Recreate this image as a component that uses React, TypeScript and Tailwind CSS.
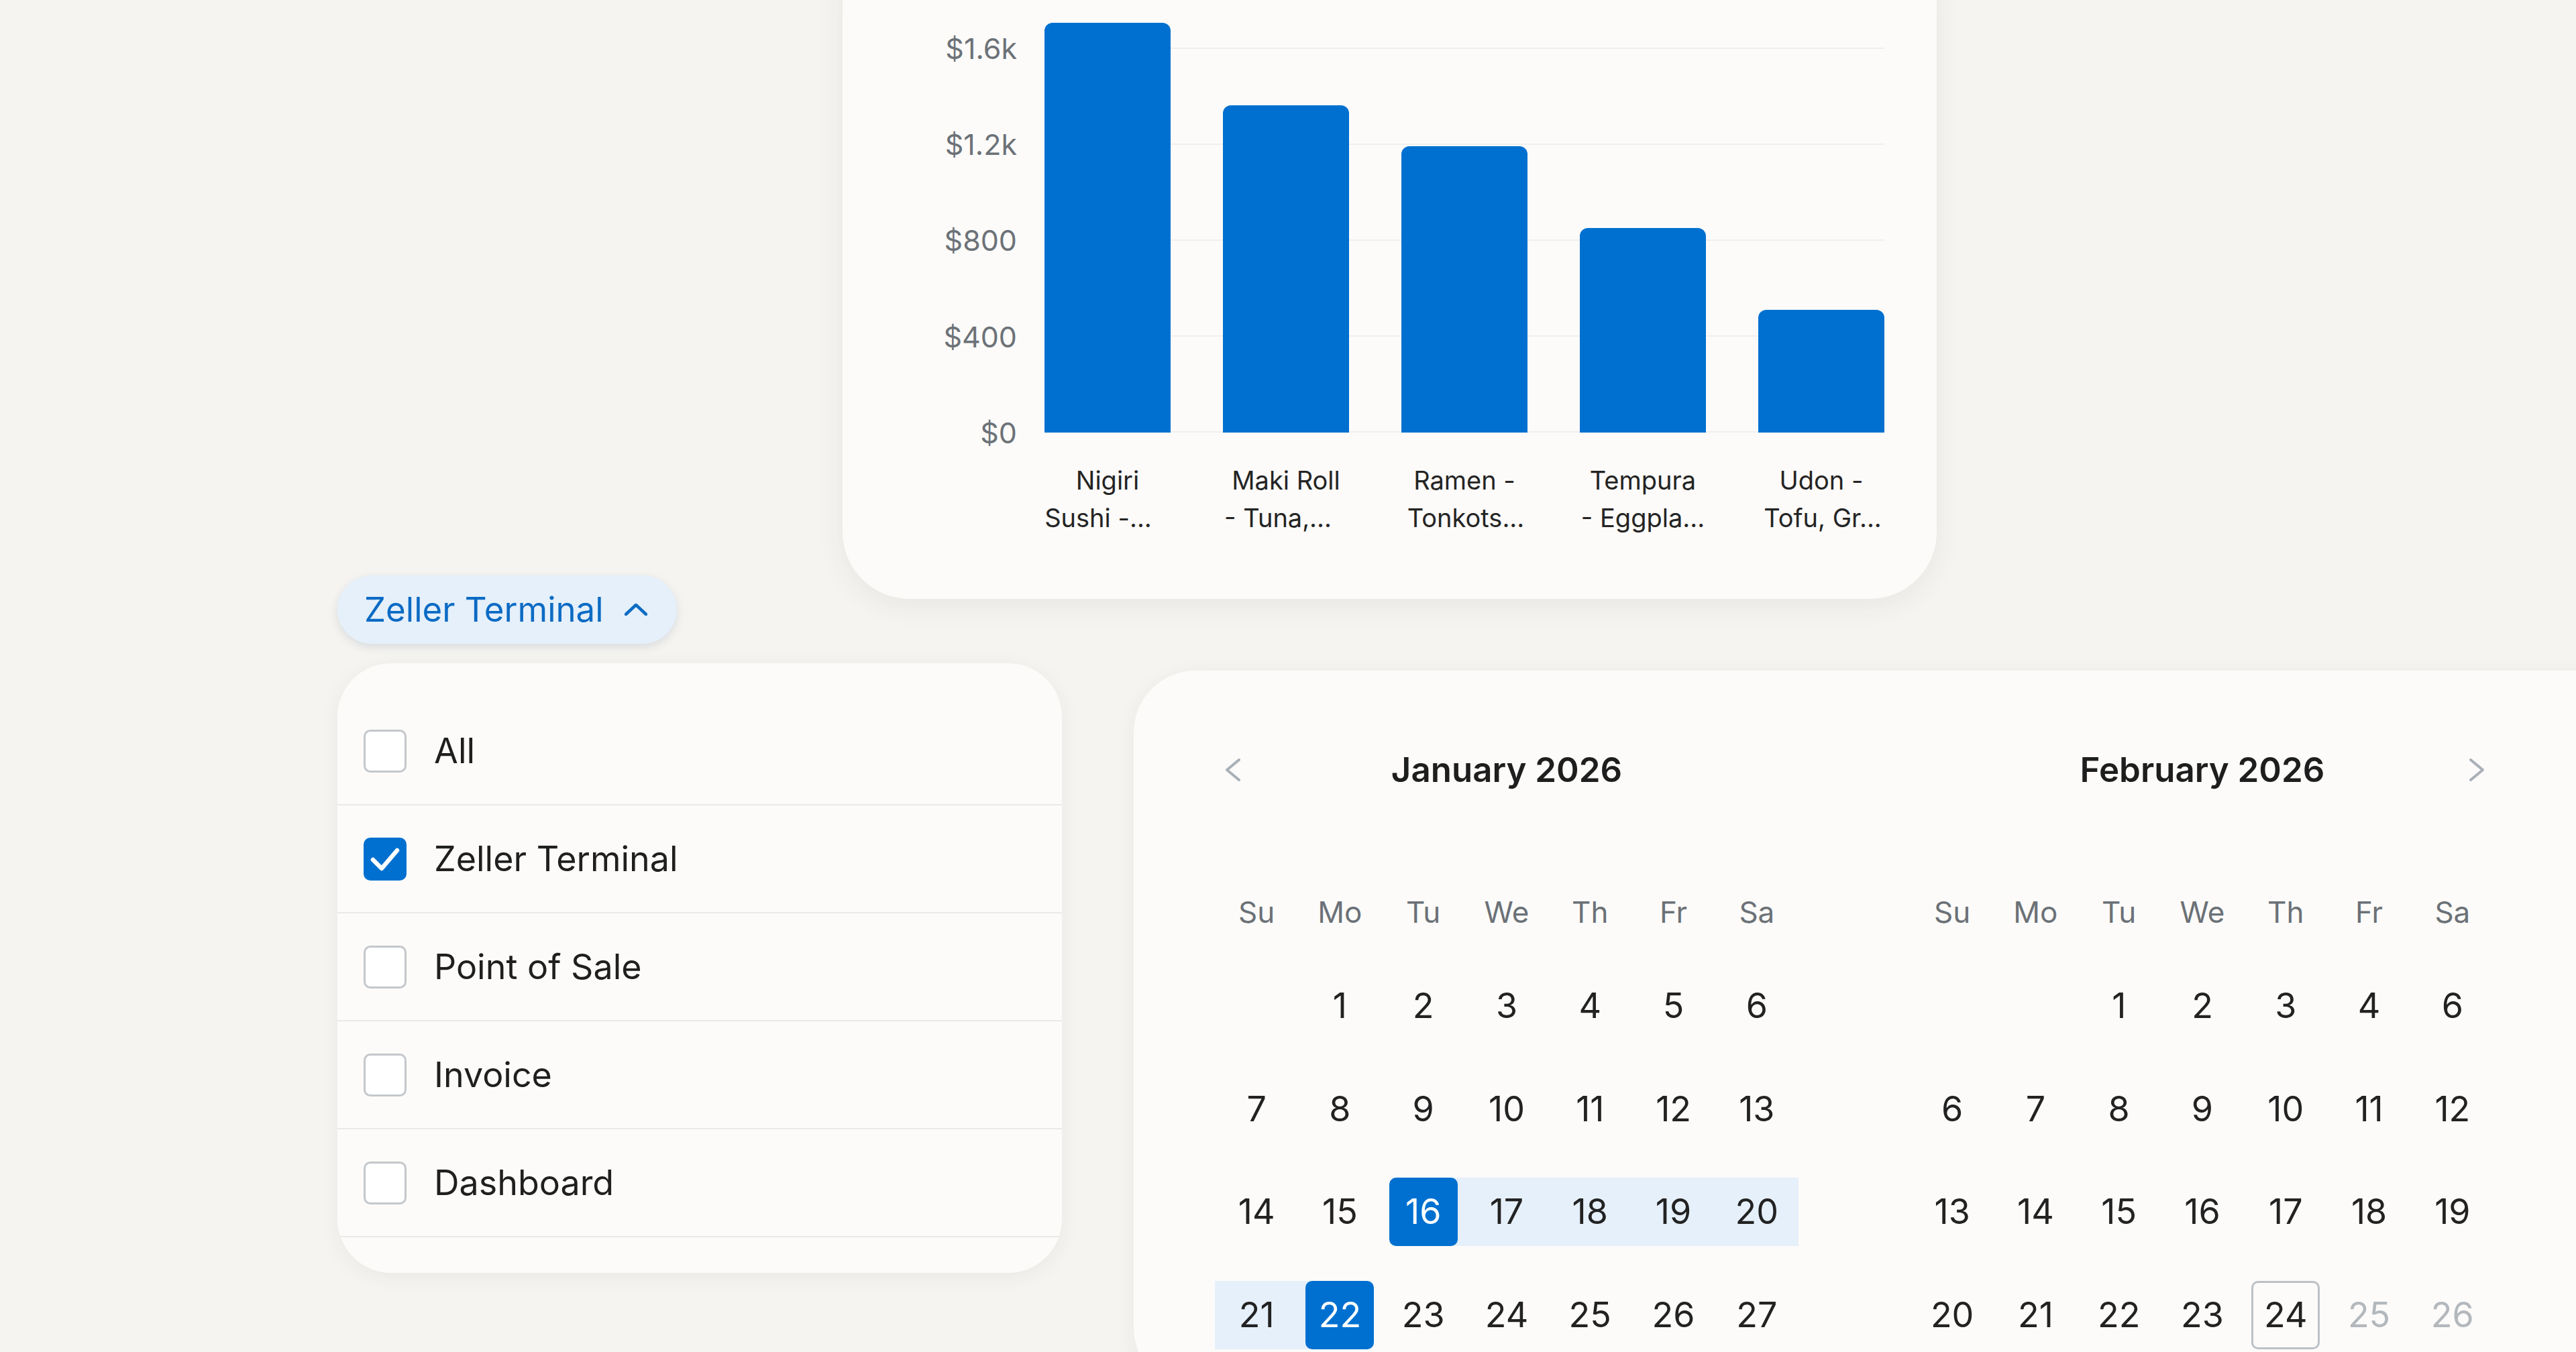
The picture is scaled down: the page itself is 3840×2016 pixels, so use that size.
import type { ReactNode } from "react";

const bars = [
	{ value: 1707, l1: "Nigiri", l2: "Sushi -...", shift: "pr-[28px]" },
	{ value: 1363, l1: "Maki Roll", l2: "- Tuna,...", shift: "pr-[24px]" },
	{ value: 1193, l1: "Ramen -", l2: "Tonkots...", shift: "pl-[4px]" },
	{ value: 852, l1: "Tempura", l2: "- Eggpla...", shift: "" },
	{ value: 511, l1: "Udon -", l2: "Tofu, Gr...", shift: "pl-[4px]" },
];

const ticks = ["$1.6k", "$1.2k", "$800", "$400", "$0"];

// px per dollar on the y axis
const SCALE = 573 / 1600;

const channels = [
	{ label: "All", checked: false },
	{ label: "Zeller Terminal", checked: true },
	{ label: "Point of Sale", checked: false },
	{ label: "Invoice", checked: false },
	{ label: "Dashboard", checked: false },
];

const weekdays = ["Su", "Mo", "Tu", "We", "Th", "Fr", "Sa"];

type Day = {
	n?: number;
	kind?: "start" | "end" | "range" | "today" | "disabled";
};

const january: Day[][] = [
	[{}, { n: 1 }, { n: 2 }, { n: 3 }, { n: 4 }, { n: 5 }, { n: 6 }],
	[{ n: 7 }, { n: 8 }, { n: 9 }, { n: 10 }, { n: 11 }, { n: 12 }, { n: 13 }],
	[
		{ n: 14 },
		{ n: 15 },
		{ n: 16, kind: "start" },
		{ n: 17, kind: "range" },
		{ n: 18, kind: "range" },
		{ n: 19, kind: "range" },
		{ n: 20, kind: "range" },
	],
	[
		{ n: 21, kind: "range" },
		{ n: 22, kind: "end" },
		{ n: 23 },
		{ n: 24 },
		{ n: 25 },
		{ n: 26 },
		{ n: 27 },
	],
];

const february: Day[][] = [
	[{}, {}, { n: 1 }, { n: 2 }, { n: 3 }, { n: 4 }, { n: 6 }],
	[{ n: 6 }, { n: 7 }, { n: 8 }, { n: 9 }, { n: 10 }, { n: 11 }, { n: 12 }],
	[{ n: 13 }, { n: 14 }, { n: 15 }, { n: 16 }, { n: 17 }, { n: 18 }, { n: 19 }],
	[
		{ n: 20 },
		{ n: 21 },
		{ n: 22 },
		{ n: 23 },
		{ n: 24, kind: "today" },
		{ n: 25, kind: "disabled" },
		{ n: 26, kind: "disabled" },
	],
];

function ChartCard() {
	return (
		<section className="ml-[1256px] mt-[-100px] w-[1631px] rounded-[100px] bg-[#fcfbf9] pt-[100px] pb-[93px] pr-[79px] shadow-[0_10px_40px_rgba(60,50,30,0.07)]">
			<div className="flex">
				<div className="w-[260px] shrink-0">
					<div className="mt-[72px] flex h-[573px] flex-col justify-between">
						{ticks.map((t) => (
							<div
								key={t}
								className="flex h-0 items-center justify-end text-[43px] text-[#6c7278]"
							>
								{t}
							</div>
						))}
					</div>
				</div>
				<div className="ml-[41px] flex-1">
					<div className="relative h-[645px]">
						<div className="absolute inset-x-0 top-[71px] bottom-0 flex flex-col justify-between">
							{ticks.map((t) => (
								<div key={t} className="h-[2px] bg-[#efefed]" />
							))}
						</div>
						<div className="relative flex h-full items-end gap-[78px]">
							{bars.map((b) => (
								<div
									key={b.l1}
									className="w-[188px] rounded-t-[12px] bg-[#0070d0]"
									style={{ height: Math.round(b.value * SCALE) }}
								/>
							))}
						</div>
					</div>
					<div className="mt-[43px] flex gap-[78px]">
						{bars.map((b) => (
							<div
								key={b.l1}
								className="w-[188px] text-center text-[38px] leading-[56px] text-[#242424] whitespace-nowrap"
							>
								<div>{b.l1}</div>
								<div className={b.shift}>{b.l2}</div>
							</div>
						))}
					</div>
				</div>
			</div>
		</section>
	);
}

function Checkbox({ checked }: { checked: boolean }) {
	if (checked) {
		return (
			<div className="flex size-[64px] shrink-0 items-center justify-center rounded-[10px] bg-[#0070d0]">
				<svg width="64" height="64" viewBox="0 0 64 64" fill="none">
					<polyline
						points="14,33 27,46 50,19"
						stroke="white"
						strokeWidth="6.5"
						strokeLinecap="round"
						strokeLinejoin="round"
					/>
				</svg>
			</div>
		);
	}
	return (
		<div className="size-[64px] shrink-0 rounded-[10px] border-[3px] border-[#c3c7cb] bg-white" />
	);
}

function ChannelFilter() {
	return (
		<div className="ml-[503px] w-[1080px] shrink-0">
			<button
				type="button"
				className="flex h-[102px] items-center gap-[31px] rounded-full bg-[#e5f0fa] pl-[40px] pr-[44px] text-[51px] text-[#0b6bc4] shadow-[0_5px_14px_rgba(40,60,90,0.13)]"
			>
				<span>Zeller Terminal</span>
				<svg width="34" height="18" viewBox="0 0 34 18" fill="none">
					<polyline
						points="2,16 17,2 32,16"
						stroke="#0b6bc4"
						strokeWidth="4.5"
						strokeLinecap="round"
						strokeLinejoin="round"
					/>
				</svg>
			</button>
			<div className="mt-[29px] overflow-hidden rounded-[80px] bg-[#fcfbf9] pt-[51px] pb-[53px] shadow-[0_6px_30px_rgba(60,50,30,0.06)]">
				{channels.map((c) => (
					<div
						key={c.label}
						className="flex h-[161px] items-center gap-[41px] border-b-2 border-[#e9e9e7] pl-[39px] text-[52px] text-[#1f1f1f]"
					>
						<Checkbox checked={c.checked} />
						<span>{c.label}</span>
					</div>
				))}
			</div>
		</div>
	);
}

function Chevron({ dir }: { dir: "left" | "right" }) {
	return (
		<svg width="22" height="34" viewBox="0 0 22 34" fill="none">
			<polyline
				points={dir === "left" ? "20,2 2,17 20,32" : "2,2 20,17 2,32"}
				stroke="#a9b0b7"
				strokeWidth="4"
				strokeLinecap="round"
				strokeLinejoin="round"
			/>
		</svg>
	);
}

function DayCell({ day }: { day: Day }) {
	const { n, kind } = day;
	let inner: ReactNode = null;
	if (n !== undefined) {
		if (kind === "start" || kind === "end") {
			inner = (
				<div className="relative flex size-[102px] items-center justify-center rounded-[10px] bg-[#0070d0] text-white">
					{n}
				</div>
			);
		} else if (kind === "today") {
			inner = (
				<div className="flex size-[102px] items-center justify-center rounded-[10px] border-[3px] border-[#bcc1c6]">
					{n}
				</div>
			);
		} else {
			inner = (
				<span className={kind === "disabled" ? "relative text-[#b3b8bd]" : "relative"}>
					{n}
				</span>
			);
		}
	}
	return (
		<div
			className={
				kind === "range"
					? "relative flex h-[102px] items-center justify-center bg-[#e6f0fa]"
					: "relative flex h-[102px] items-center justify-center"
			}
		>
			{kind === "start" && (
				<div className="absolute inset-y-0 right-0 w-1/2 bg-[#e6f0fa]" />
			)}
			{kind === "end" && (
				<div className="absolute inset-y-0 left-0 w-1/2 bg-[#e6f0fa]" />
			)}
			{inner}
		</div>
	);
}

function Month({
	title,
	weeks,
	nav,
}: {
	title: string;
	weeks: Day[][];
	nav: "left" | "right";
}) {
	return (
		<div className="w-[870px] shrink-0">
			<div className="grid h-[102px] grid-cols-[102px_1fr_102px] items-center">
				<div className="pl-[16px]">{nav === "left" && <Chevron dir="left" />}</div>
				<div className="text-center text-[51px] font-semibold text-[#1e1e1e]">
					{title}
				</div>
				<div className="flex justify-end pr-[15px]">
					{nav === "right" && <Chevron dir="right" />}
				</div>
			</div>
			<div className="mt-[110px] grid h-[102px] grid-cols-7 items-center text-center text-[44px] text-[#6b7177]">
				{weekdays.map((w) => (
					<div key={w}>{w}</div>
				))}
			</div>
			<div className="mt-[38px] flex flex-col gap-[51.5px] text-[52px] text-[#222222]">
				{weeks.map((week, i) => (
					<div key={i} className="grid grid-cols-7">
						{week.map((d, j) => (
							<DayCell key={j} day={d} />
						))}
					</div>
				))}
			</div>
		</div>
	);
}

function DateRangeCard() {
	return (
		<section className="ml-[107px] mt-[142px] w-[2300px] shrink-0 rounded-[92px] bg-[#fcfbf9] pl-[121px] pt-[97px] pb-[60px] shadow-[0_6px_30px_rgba(60,50,30,0.06)]">
			<div className="flex gap-[167px]">
				<Month title="January 2026" weeks={january} nav="left" />
				<Month title="February 2026" weeks={february} nav="right" />
			</div>
		</section>
	);
}

export default function App() {
	return (
		<div className="h-[2016px] w-[3840px] overflow-hidden bg-[#f5f4f1] font-['Inter',sans-serif]">
			<ChartCard />
			<div className="mt-[-35px] flex items-start">
				<ChannelFilter />
				<DateRangeCard />
			</div>
		</div>
	);
}
